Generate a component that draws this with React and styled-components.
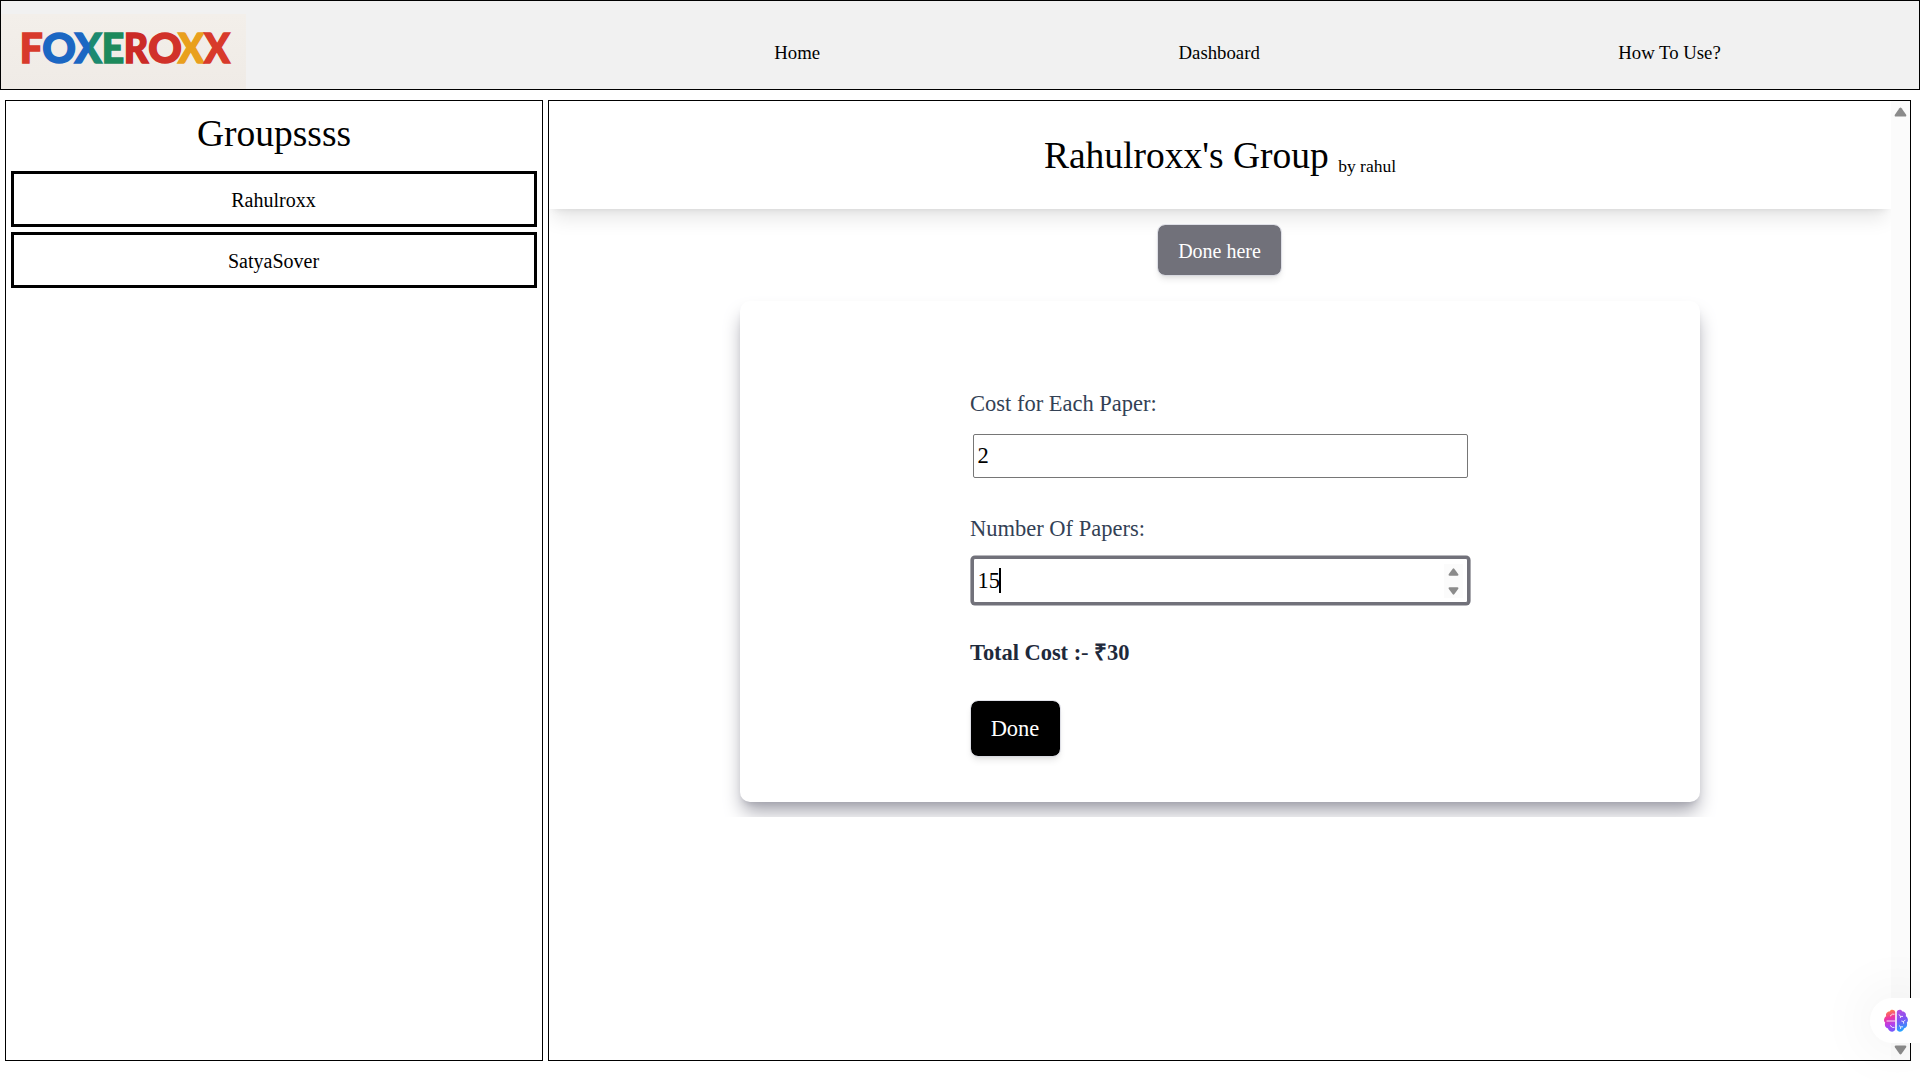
import React from 'react';
import styled, { createGlobalStyle, css } from 'styled-components';

const GlobalStyle = createGlobalStyle`
  *, *::before, *::after { box-sizing: border-box; }
  html, body { margin: 0; padding: 0; background: #fff; overflow: hidden; }
  body { font-family: "Liberation Serif", "Times New Roman", serif; color: #000; font-size: 20px; }
  button, input { font-family: inherit; }
`;

const Page = styled.div`
  height: 1080px;
  display: flex;
  flex-direction: column;
`;

const Header = styled.header`
  height: 90px;
  flex: none;
  display: flex;
  justify-content: space-between;
  background: #f1f1f1;
  border: 1px solid #000;
`;

const LogoPlate = styled.div`
  width: 245px;
  height: 75px;
  margin-top: 13px;
  background: linear-gradient(180deg, #f3efea, #efebe6);
`;

const Nav = styled.nav`
  width: 1305px;
  margin-right: 19px;
  padding-top: 16px;
  display: flex;
  align-items: center;
  justify-content: space-around;
`;

const NavLink = styled.a`
  font-size: 18.75px;
  line-height: 28px;
  color: #000;
`;

const Main = styled.main`
  height: 971px;
  padding: 10px 9px 0 5px;
  display: grid;
  grid-template-columns: 538px 1363px;
  column-gap: 5px;
`;

const Sidebar = styled.aside`
  height: 961px;
  border: 1px solid #000;
  padding: 10px 5px;
  display: flex;
  flex-direction: column;
  gap: 5px;
`;

const SidebarTitle = styled.h1`
  margin: 0 0 10px;
  height: 45px;
  font-size: 37.5px;
  line-height: 45px;
  font-weight: 400;
  text-align: center;
`;

const GroupButton = styled.button`
  height: 56px;
  flex: none;
  padding: 1px 1px 0 0;
  background: #fff;
  border: 3px solid #000;
  font-size: 20px;
  line-height: 30px;
  color: #000;
`;

const Detail = styled.section`
  height: 961px;
  border: 1px solid #000;
  display: grid;
  grid-template-columns: 1fr 19px;
`;

const Content = styled.div`
  height: 716px;
  overflow: hidden;
  display: flex;
  flex-direction: column;
  align-items: center;
`;

const TitleBar = styled.div`
  width: 100%;
  height: 108px;
  flex: none;
  padding-top: 32px;
  text-align: center;
  box-shadow: 0 12.5px 18.75px -3.75px rgba(0, 0, 0, 0.1), 0 5px 7.5px -5px rgba(0, 0, 0, 0.1);
`;

const GroupTitle = styled.h2`
  margin: 0;
  font-size: 37.5px;
  line-height: 45px;
  font-weight: 400;
`;

const Owner = styled.sub`
  font-size: 17.5px;
  line-height: 0;
  vertical-align: -4px;
`;

const ActionButton = styled.button`
  flex: none;
  border: 0;
  outline: 1px solid rgba(212, 214, 224, 0.7);
  outline-offset: -0.5px;
  border-radius: 7px;
  color: #fff;
  box-shadow: 0 5px 7.5px -1.25px rgba(0, 0, 0, 0.1), 0 2.5px 5px -2.5px rgba(0, 0, 0, 0.1);
  ${(p) =>
    p.$primary
      ? css`
          width: 89px;
          height: 55px;
          margin: 31px 0 0 1px;
          padding: 0 1px 0 0;
          background: #000;
          font-size: 22.5px;
        `
      : css`
          width: 123px;
          height: 50px;
          margin: 16px 1px 0 0;
          padding: 2px 0 0;
          background: #71717a;
          font-size: 20px;
        `}
`;

const Card = styled.form`
  width: 960px;
  height: 501px;
  flex: none;
  margin-top: 26px;
  padding: 85px 230px 0;
  display: flex;
  flex-direction: column;
  align-items: flex-start;
  background: #fff;
  border-radius: 10px;
  box-shadow: 0 12.5px 18.75px -3.75px #a1a1ab, 0 5px 7.5px -5px #a1a1ab;
`;

const Field = styled.div`
  width: 500px;
  height: ${(p) => (p.$last ? 124 : 125)}px;
  flex: none;
`;

const Label = styled.label`
  display: block;
  height: 35px;
  font-size: 22.5px;
  line-height: 35px;
  color: #334155;
`;

const InputBox = styled.div`
  width: 495px;
  height: 44px;
  margin: 13px 0 0 3px;
  padding: 0 4px 0 3.5px;
  display: flex;
  align-items: center;
  border: 1px solid #767676;
  border-radius: 2px;
  background: #fff;
  font-size: 22.5px;
  line-height: 34px;
  ${(p) =>
    p.$focused &&
    css`
      height: 45px;
      margin-top: 12px;
      border-color: #71717a;
      box-shadow: 0 0 0 2.6px #71717a;
    `}
`;

const Caret = styled.span`
  width: 2px;
  height: 25px;
  margin-left: -1.5px;
  background: #000;
`;

const Spinner = styled.span`
  width: 19px;
  height: 34px;
  margin-left: auto;
  display: flex;
  flex-direction: column;
  justify-content: space-between;
  align-items: center;
  padding: 4px 0 3px;
  background: #fbfbfb;
`;

const Total = styled.p`
  margin: 0;
  height: 35px;
  font-size: 22.5px;
  line-height: 35px;
  letter-spacing: -0.05px;
  font-weight: 700;
  color: #1e293b;
`;

const Dash = styled.span`
  font-weight: 400;
`;

const Scrollbar = styled.div`
  height: 959px;
  padding: 6px 0 5px;
  display: flex;
  flex-direction: column;
  justify-content: space-between;
  align-items: center;
  background: #fbfbfb;
`;

const AssistantTab = styled.div`
  position: fixed;
  right: 0;
  top: 998px;
  width: 50px;
  height: 45px;
  padding-left: 12.5px;
  display: flex;
  align-items: center;
  background: #fff;
  border-radius: 23px 0 0 23px;
  box-shadow: 0 0 60px rgba(0, 0, 0, 0.09);
`;

function Arrow({ width, height, down }) {
  return (
    <svg width={width} height={height} viewBox="0 0 13 10" preserveAspectRatio="none">
      <path
        d="M5.4 1.2 L1 7.6 Q0 9.6 2 9.6 H11 Q13 9.6 12 7.6 L7.6 1.2 Q6.5 -0.3 5.4 1.2Z"
        fill="#8b8b8b"
        transform={down ? 'rotate(180 6.5 5)' : undefined}
      />
    </svg>
  );
}

const LETTERS = [
  ['F', 18.8, 23, '#d83a2b'],
  ['O', 41.2, 33.6, '#1b67c3'],
  ['X', 73.4, 27.4, 'url(#blueGreen)'],
  ['E', 100.8, 22.4, '#1c8a5c'],
  ['R', 122.8, 24.6, '#cb2a26'],
  ['O', 147.2, 33.6, '#d1322a'],
  ['X', 177, 26, '#e9a01d'],
  ['X', 203, 26, '#d83a2b'],
];

function Logo() {
  return (
    <svg width="245" height="75" role="img" aria-label="Foxeroxx">
      <defs>
        <linearGradient id="blueGreen" x1="0" y1="0" x2="1" y2="0">
          <stop offset="0.52" stopColor="#1b67c3" />
          <stop offset="0.6" stopColor="#1c8a70" />
        </linearGradient>
      </defs>
      {LETTERS.map(([char, x, width, fill], i) => (
        <text
          key={i}
          x={x}
          y="49.2"
          textLength={width}
          lengthAdjust="spacingAndGlyphs"
          fontFamily="Lato, sans-serif"
          fontWeight="900"
          fontSize="41.2"
          fill={fill}
          stroke={fill}
          strokeWidth="1.5"
        >
          {char}
        </text>
      ))}
    </svg>
  );
}

function BrainIcon() {
  return (
    <svg width="26" height="26" viewBox="0 0 26 26" fill="none">
      <defs>
        <linearGradient id="lobeLeft" x1="4" y1="2" x2="11" y2="24" gradientUnits="userSpaceOnUse">
          <stop offset="0" stopColor="#ff8a3c" />
          <stop offset="0.35" stopColor="#f0369f" />
          <stop offset="0.65" stopColor="#b43fec" />
          <stop offset="1" stopColor="#6b5cff" />
        </linearGradient>
        <linearGradient id="lobeRight" x1="15" y1="2" x2="22" y2="22" gradientUnits="userSpaceOnUse">
          <stop offset="0" stopColor="#b84be0" />
          <stop offset="0.5" stopColor="#7a55f5" />
          <stop offset="1" stopColor="#22a7ff" />
        </linearGradient>
      </defs>
      <path d="M12.2 4C11.6 1.4 7.6 1 6.6 3.6C4 3.5 2.4 6 3.2 8.2C.8 9.6.4 13 2.2 14.6C1.2 17.6 2.6 20 5 20.4C5.6 23.8 11 25 12.2 21.6Z" fill="url(#lobeLeft)" />
      <path d="M13.8 4C14.4 1.4 18.4 1 19.4 3.6C22 3.5 23.6 6 22.8 8.2C25.2 9.6 25.6 13 23.8 14.6C24.8 17.6 23.4 20 21 20.4C20.4 23.8 15 25 13.8 21.6Z" fill="url(#lobeRight)" />
      <path
        d="M11.5 6.2H9.4L7 8.2M3.6 13H12M11.5 19.4H9.4L7 17.4M16 6.4L17.4 8.4V10M17.4 8.4H20M18.4 13L20.6 13.6L22.4 11.8M20.6 13.6V15.6M16 17.6L17.6 18.8H20M17.6 18.8V21"
        stroke="#fff"
        strokeWidth="1"
        strokeOpacity="0.85"
      />
    </svg>
  );
}

export default function App() {
  return (
    <>
      <GlobalStyle />
      <Page>
        <Header>
          <LogoPlate>
            <Logo />
          </LogoPlate>
          <Nav>
            <NavLink>Home</NavLink>
            <NavLink>Dashboard</NavLink>
            <NavLink>How To Use?</NavLink>
          </Nav>
        </Header>
        <Main>
          <Sidebar>
            <SidebarTitle>Groupssss</SidebarTitle>
            <GroupButton>Rahulroxx</GroupButton>
            <GroupButton>SatyaSover</GroupButton>
          </Sidebar>
          <Detail>
            <Content>
              <TitleBar>
                <GroupTitle>
                  Rahulroxx's Group <Owner>by rahul</Owner>
                </GroupTitle>
              </TitleBar>
              <ActionButton>Done here</ActionButton>
              <Card>
                <Field>
                  <Label>Cost for Each Paper:</Label>
                  <InputBox>2</InputBox>
                </Field>
                <Field $last>
                  <Label>Number Of Papers:</Label>
                  <InputBox $focused>
                    15
                    <Caret />
                    <Spinner>
                      <Arrow width={11} height={8} />
                      <Arrow width={11} height={8} down />
                    </Spinner>
                  </InputBox>
                </Field>
                <Total>
                  Total Cost :<Dash>-</Dash> ₹30
                </Total>
                <ActionButton type="button" $primary>
                  Done
                </ActionButton>
              </Card>
            </Content>
            <Scrollbar>
              <Arrow width={13} height={10} />
              <Arrow width={13} height={10} down />
            </Scrollbar>
          </Detail>
        </Main>
      </Page>
      <AssistantTab>
        <BrainIcon />
      </AssistantTab>
    </>
  );
}
